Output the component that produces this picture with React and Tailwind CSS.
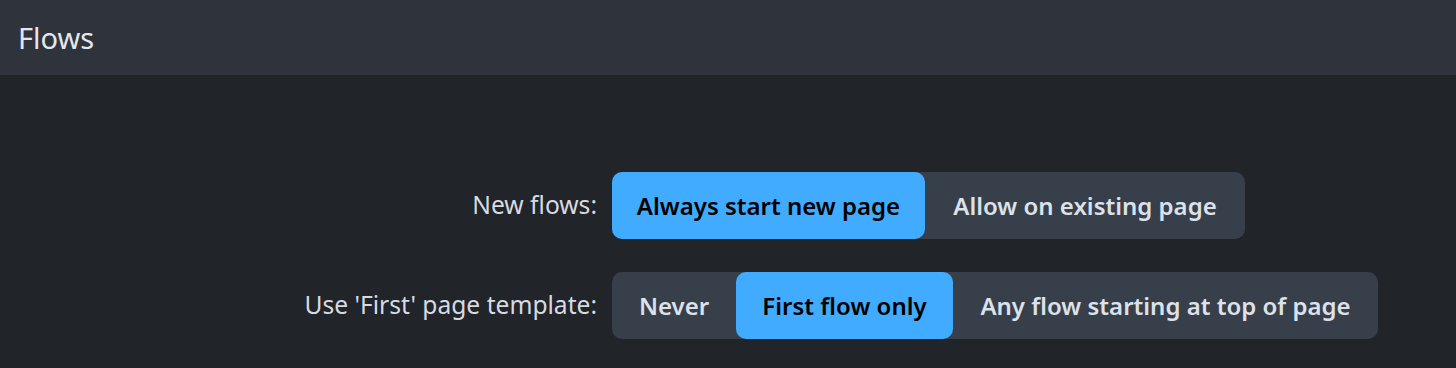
export default function App() {
  const rows = [
    {
      label: "New flows:",
      options: [
        { text: "Always start new page", w: "w-[313px]", active: true },
        { text: "Allow on existing page", w: "w-[320px]" },
      ],
    },
    {
      label: "Use 'First' page template:",
      options: [
        { text: "Never", w: "w-[124px]" },
        { text: "First flow only", w: "w-[217px]", active: true },
        { text: "Any flow starting at top of page", w: "w-[425px]" },
      ],
    },
  ];

  return (
    <div className="w-[1456px] h-[368px] bg-[#212428] font-['Noto_Sans','Liberation_Sans',sans-serif] text-[#dde1e8]">
      <div className="h-[75px] bg-[#2e333c] flex items-center px-[18px]">
        <span className="text-[29px] text-[#e4e7ee] leading-none">Flows</span>
      </div>
      <div className="pt-[97px] flex flex-col gap-[33px]">
        {rows.map((row) => (
          <div key={row.label} className="flex items-center">
            <div className="w-[612px] pr-[15px] text-right text-[24.6px] text-[#d7dbe2]">{row.label}</div>
            <div className="flex h-[67px] rounded-[10px] bg-[#373f4b]">
              {row.options.map((o) => (
                <div
                  key={o.text}
                  className={`${o.w} flex items-center justify-center rounded-[10px] text-[24px] font-semibold whitespace-nowrap ${
                    o.active ? "bg-[#40abff] text-black" : "text-[#dde1e8]"
                  }`}
                >
                  {o.text}
                </div>
              ))}
            </div>
          </div>
        ))}
      </div>
    </div>
  );
}
